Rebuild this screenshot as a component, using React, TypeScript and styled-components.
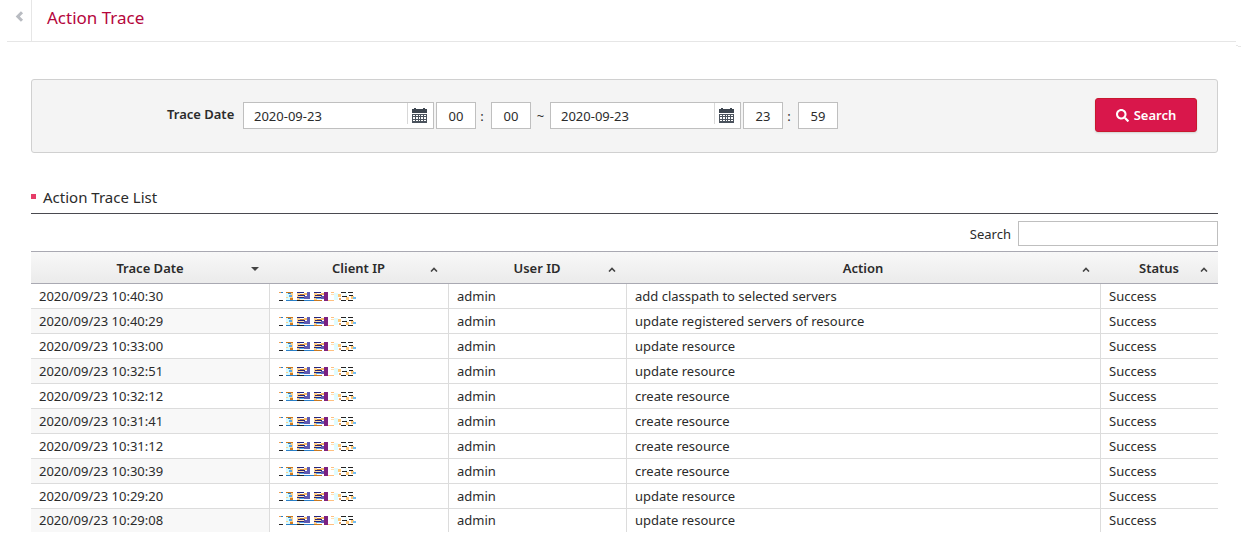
import React from "react";
import styled, { createGlobalStyle } from "styled-components";
import { FaSearch } from "react-icons/fa";

const GlobalStyle = createGlobalStyle`
  * { box-sizing: border-box; }
  body {
    margin: 0;
    background: #fff;
    color: #2b2b2b;
    font: 13px/20px "Noto Sans", "Open Sans", sans-serif;
  }
  button, input { font: inherit; color: inherit; }
`;

const Header = styled.header`
  display: flex;
  height: 42px;
  margin: 0 5px 0 7px;
  border-bottom: 1px solid #e6e6e6;
`;

const BackButton = styled.button`
  display: flex;
  width: 25px;
  padding: 11px 0 0 8px;
  border: 0;
  border-right: 1px solid #e6e6e6;
  background: none;
`;

const PageTitle = styled.h1`
  margin: 0;
  padding: 6px 0 0 15px;
  color: #b5063c;
  font-size: 17px;
  line-height: 24px;
  font-weight: 400;
`;

const HeaderEdge = styled.div`
  display: flex;
  justify-content: flex-end;
  padding-top: 3px;
`;

const Main = styled.main`
  padding: 32px 23px 0 31px;
`;

const FilterPanel = styled.form`
  display: flex;
  align-items: flex-start;
  justify-content: space-between;
  height: 74px;
  padding: 18px 20px 0 135px;
  border: 1px solid #d0d0d0;
  border-radius: 3px;
  background: #f4f4f4;
`;

const Fields = styled.div`
  display: flex;
  align-items: center;
  height: 27px;
  margin-top: 4px;
`;

const FieldLabel = styled.label`
  width: 76px;
  padding-bottom: 4px;
  font-weight: 600;
`;

const DateBox = styled.div`
  display: flex;
  width: 191px;
  height: 27px;
  margin-right: 2px;
  border: 1px solid #bfbfbf;
  background: #fff;
`;

const DateInput = styled.input`
  flex: 1;
  min-width: 0;
  padding: 0 10px;
  border: 0;
  background: none;
  outline: 0;
`;

const CalendarButton = styled.button`
  display: flex;
  width: 26px;
  height: 21px;
  padding: 5px 0 0 4px;
  border: 0;
  border-left: 1px solid #d8d8d8;
  background: none;
`;

const TimeInput = styled.input`
  width: 40px;
  height: 27px;
  padding: 0;
  border: 1px solid #bfbfbf;
  background: #fff;
  text-align: center;
  outline: 0;
`;

const Separator = styled.span<{ $wide?: boolean }>`
  width: ${(p) => (p.$wide ? 19 : 15)}px;
  padding-right: ${(p) => (p.$wide ? 0 : 3)}px;
  text-align: center;
`;

const SearchButton = styled.button`
  display: flex;
  align-items: center;
  justify-content: center;
  gap: 5px;
  width: 102px;
  height: 34px;
  padding: 0;
  border: 1px solid #c8182e;
  border-radius: 3px;
  background: #d9174b;
  box-shadow: 0 1px 2px rgba(0, 0, 0, 0.15);
  color: #fff;
  font-weight: 600;
`;

const SectionTitle = styled.h2`
  display: flex;
  align-items: center;
  gap: 7px;
  height: 32px;
  margin: 29px 0 0;
  padding-bottom: 2px;
  border-bottom: 1px solid #4a4a50;
  font-size: 15px;
  font-weight: 400;
  &::before {
    content: "";
    width: 5px;
    height: 5px;
    background: #e63c68;
  }
`;

const TableSearch = styled.div`
  display: flex;
  align-items: center;
  justify-content: flex-end;
  gap: 7px;
  padding: 7px 0 5px;
`;

const TableSearchInput = styled.input`
  width: 200px;
  height: 25px;
  padding: 0 8px;
  border: 1px solid #bfbfbf;
  background: #fff;
  outline: 0;
`;

const Table = styled.table`
  width: 100%;
  table-layout: fixed;
  border-spacing: 0;
`;

const HeadCell = styled.th`
  height: 33px;
  padding: 0 10px 0 18px;
  border-top: 1px solid #a9a9b2;
  border-bottom: 1px solid #a9a9b2;
  background: linear-gradient(#f8f8f8, #ebebeb);
  font-weight: 600;
`;

const SortButton = styled.button`
  display: flex;
  align-items: center;
  width: 100%;
  padding: 0;
  border: 0;
  background: none;
  font-weight: 600;
  span { flex: 1; }
  svg { margin-top: 4px; }
`;

const Cell = styled.td`
  height: 25px;
  padding: 0 8px 1px;
  border-bottom: 1px solid #dcdcdc;
  border-left: 1px solid #dcdcdc;
  &:first-child { border-left: 0; }
  tr:nth-child(even) &:first-child { background: #f8f8f8; }
  tr:last-child & { height: 23px; border-bottom: 0; }
`;

const MaskSvg = styled.svg`
  display: block;
  margin: 1px 0 0 1px;
`;

const Calendar = () => (
  <svg width="15" height="15" viewBox="0 0 15 15" shapeRendering="crispEdges">
    <path d="M0 1h2V0h2v1h7V0h2v1h2v4H0z" fill="#3d454f" />
    <path d="M0 6h15v9H0z" fill="#4b535d" />
    <path
      d="M1 7h2v1H1zM4 7h2v1H4zM7 7h1v1H7zM9 7h2v1H9zM12 7h2v1h-2zM1 9h2v2H1zM4 9h2v2H4zM7 9h1v2H7zM9 9h2v2H9zM12 9h2v2h-2zM1 12h2v1H1zM4 12h2v1H4zM7 12h1v1H7zM9 12h2v1H9zM12 12h2v1h-2z"
      fill="#fff"
    />
  </svg>
);

const SortIcon = ({ desc }: { desc?: boolean }) =>
  desc ? (
    <svg width="8" height="5" viewBox="0 0 8 5">
      <path d="M0 0h8L4 4z" fill="#444" />
    </svg>
  ) : (
    <svg width="8" height="5" viewBox="0 0 8 5">
      <path d="M1 4.5 4 1.5 7 4.5" fill="none" stroke="#444" strokeWidth="1.6" />
    </svg>
  );

// Each block is [x, y, width, height, colour].
const maskBlocks: [number, number, number, number, string][] = [
  [0, 0, 2, 1, "#f0a050"], [2, 0, 2, 1, "#2a80c8"], [0, 8, 4, 1, "#222"],
  [7, 0, 7, 1, "#c87820"], [7, 1, 4, 7, "#d8fbff"], [11, 1, 3, 7, "#ffd08a"],
  [9, 1, 3, 1, "#2a80c8"], [10, 3, 3, 2, "#58a8ec"], [7, 5, 2, 1, "#ffd08a"], [11, 6, 3, 2, "#d07c20"],
  [7, 8, 11, 1, "#2a80c8"],
  [18, 0, 7, 1, "#24247c"], [18, 1, 3, 7, "#ffd08a"], [21, 2, 4, 1, "#d08030"], [19, 3, 7, 1, "#24247c"],
  [20, 4, 5, 1, "#ffe0b0"], [18, 5, 7, 1, "#24247c"], [20, 6, 5, 1, "#58a8ec"], [18, 8, 7, 1, "#222"],
  [25, 1, 3, 2, "#f4b868"], [28, 0, 3, 7, "#5f5ab2"], [25, 4, 3, 3, "#5f5ab2"], [25, 8, 10, 1, "#2a80c8"],
  [35, 0, 7, 1, "#24247c"], [35, 1, 3, 7, "#ffd08a"], [38, 2, 4, 1, "#d08030"], [36, 3, 7, 1, "#24247c"],
  [37, 4, 5, 1, "#ffe0b0"], [35, 5, 7, 1, "#24247c"], [37, 6, 5, 1, "#58a8ec"], [35, 8, 8, 1, "#c87820"],
  [42, 1, 3, 2, "#f4b868"], [42, 4, 3, 3, "#5f5ab2"], [45, 0, 4, 9, "#7d207f"],
  [49, 8, 6, 1, "#ffc080"], [52, 0, 3, 1, "#ffc080"], [52, 2, 3, 1, "#ffe0b0"],
  [55, 1, 4, 7, "#e0fcff"], [59, 2, 3, 3, "#ffc878"], [60, 6, 2, 2, "#e8a060"],
  [62, 0, 5, 1, "#222"], [63, 4, 5, 1, "#222"], [62, 8, 5, 1, "#222"], [66, 1, 2, 3, "#e4fdff"],
  [69, 0, 5, 1, "#222"], [67, 5, 3, 3, "#ffc878"], [70, 3, 4, 1, "#222"], [69, 8, 5, 1, "#222"],
  [72, 4, 3, 3, "#ffc878"], [74, 5, 3, 2, "#70bdf4"],
];

const MaskedAddress = () => (
  <MaskSvg width="77" height="9" viewBox="0 0 77 9" shapeRendering="crispEdges" role="img">
    {maskBlocks.map(([x, y, w, h, fill], i) => (
      <rect key={i} x={x} y={y} width={w} height={h} fill={fill} />
    ))}
  </MaskSvg>
);

const columns = [
  { name: "Trace Date", width: 238 },
  { name: "Client IP", width: 179 },
  { name: "User ID", width: 178 },
  { name: "Action" },
  { name: "Status", width: 118 },
];

const rows = [
  ["2020/09/23 10:40:30", "add classpath to selected servers"],
  ["2020/09/23 10:40:29", "update registered servers of resource"],
  ["2020/09/23 10:33:00", "update resource"],
  ["2020/09/23 10:32:51", "update resource"],
  ["2020/09/23 10:32:12", "create resource"],
  ["2020/09/23 10:31:41", "create resource"],
  ["2020/09/23 10:31:12", "create resource"],
  ["2020/09/23 10:30:39", "create resource"],
  ["2020/09/23 10:29:20", "update resource"],
  ["2020/09/23 10:29:08", "update resource"],
];

const DateField = ({ id, name }: { id: string; name: string }) => (
  <DateBox>
    <DateInput id={id} aria-label={name} defaultValue="2020-09-23" />
    <CalendarButton type="button">
      <Calendar />
    </CalendarButton>
  </DateBox>
);

export default function App() {
  return (
    <>
      <GlobalStyle />
      <Header>
        <BackButton type="button">
          <svg width="9" height="11" viewBox="0 0 9 11">
            <path d="M7 1.2 2.8 5.5 7 9.8" fill="none" stroke="#b9bcc2" strokeWidth="3" />
          </svg>
        </BackButton>
        <PageTitle>Action Trace</PageTitle>
      </Header>
      <HeaderEdge>
        <svg width="5" height="2" viewBox="0 0 5 2">
          <path d="M0 0h2v1H0zM2 1h3v1H2z" fill="#e6e6e6" />
        </svg>
      </HeaderEdge>
      <Main>
        <FilterPanel onSubmit={(e) => e.preventDefault()}>
          <Fields>
            <FieldLabel htmlFor="from-date">Trace Date</FieldLabel>
            <DateField id="from-date" name="Trace Date" />
            <TimeInput aria-label="From hour" defaultValue="00" />
            <Separator>:</Separator>
            <TimeInput aria-label="From minute" defaultValue="00" />
            <Separator $wide>~</Separator>
            <DateField id="to-date" name="To date" />
            <TimeInput aria-label="To hour" defaultValue="23" />
            <Separator>:</Separator>
            <TimeInput aria-label="To minute" defaultValue="59" />
          </Fields>
          <SearchButton type="submit">
            <FaSearch size={13} />
            Search
          </SearchButton>
        </FilterPanel>
        <SectionTitle>Action Trace List</SectionTitle>
        <TableSearch>
          <label htmlFor="table-search">Search</label>
          <TableSearchInput id="table-search" />
        </TableSearch>
        <Table>
          <colgroup>
            {columns.map((c) => (
              <col key={c.name} width={c.width} />
            ))}
          </colgroup>
          <thead>
            <tr>
              {columns.map((c, i) => (
                <HeadCell key={c.name} scope="col">
                  <SortButton type="button">
                    <span>{c.name}</span>
                    <SortIcon desc={i === 0} />
                  </SortButton>
                </HeadCell>
              ))}
            </tr>
          </thead>
          <tbody>
            {rows.map(([date, action]) => (
              <tr key={date}>
                <Cell>{date}</Cell>
                <Cell>
                  <MaskedAddress />
                </Cell>
                <Cell>admin</Cell>
                <Cell>{action}</Cell>
                <Cell>Success</Cell>
              </tr>
            ))}
          </tbody>
        </Table>
      </Main>
    </>
  );
}
